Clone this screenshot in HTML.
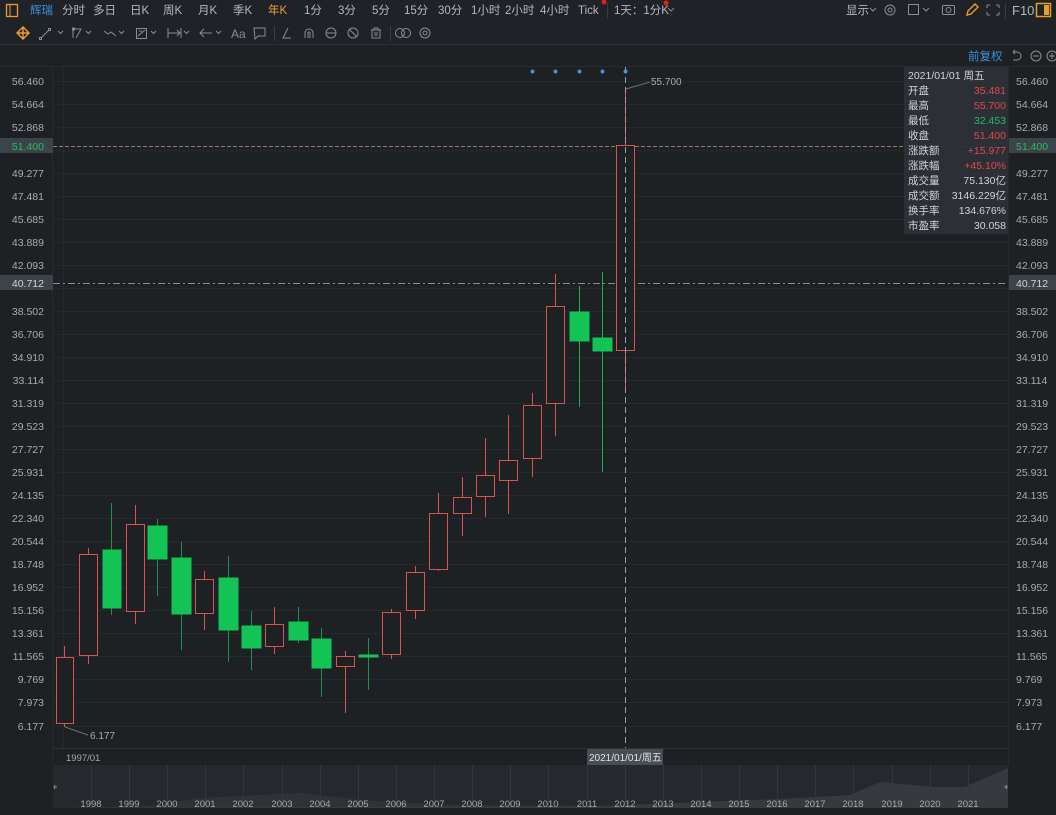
<!DOCTYPE html>
<html><head><meta charset="utf-8"><style>
html,body{margin:0;padding:0;background:#1e2124;width:1056px;height:815px;overflow:hidden;font-family:"Liberation Sans","Noto Sans CJK SC",sans-serif;}
svg{position:absolute;left:0;top:0}
</style></head><body>
<svg width="1056" height="815" viewBox="0 0 1056 815" font-family="Liberation Sans, Noto Sans CJK SC, sans-serif">
<rect width="1056" height="815" fill="#1e2124"/>
<!-- top toolbar -->
<rect x="0" y="0" width="1056" height="22" fill="#1f2226"/>
<line x1="0" y1="22.5" x2="1056" y2="22.5" stroke="#2c3035"/>
<rect x="0" y="22" width="1056" height="22" fill="#1f2226"/>
<line x1="0" y1="44.5" x2="1056" y2="44.5" stroke="#2c3035"/>
<rect x="6.5" y="4.5" width="11" height="12" fill="none" stroke="#e5a02c" stroke-width="1.3"/><line x1="10" y1="5" x2="10" y2="16" stroke="#e5a02c"/>
<g font-size="11.5" fill="#b4b8bd">
<text x="30" y="14" fill="#3d8fe0">辉瑞</text>
<text x="62" y="14">分时</text><text x="93" y="14">多日</text><text x="130" y="14">日K</text>
<text x="163" y="14">周K</text><text x="198" y="14">月K</text><text x="233" y="14">季K</text>
<text x="268" y="14" fill="#f0a030">年K</text><text x="304" y="14">1分</text><text x="338" y="14">3分</text>
<text x="372" y="14">5分</text><text x="404" y="14">15分</text><text x="438" y="14">30分</text>
<text x="471" y="14">1小时</text><text x="505" y="14">2小时</text><text x="540" y="14">4小时</text>
<text x="578" y="14">Tick</text><text x="614" y="14">1天：1分K</text>
<text x="846" y="14">显示</text>
<text x="1012" y="15" font-size="13">F10</text>
</g>
<circle cx="604" cy="2" r="2.5" fill="#e02020"/><circle cx="666" cy="3" r="2.5" fill="#e02020"/>
<line x1="607.5" y1="3" x2="607.5" y2="19" stroke="#3a3e43"/>
<g fill="none" stroke="#8a8f95" stroke-width="1">
<path d="M668 8l3 3 3-3"/><path d="M870 8l3 3 3-3"/>
<circle cx="890" cy="10" r="5"/><circle cx="890" cy="10" r="2"/>
<rect x="908.5" y="4.5" width="10" height="10"/><path d="M923 8l3 3 3-3"/>
<rect x="942.5" y="5.5" width="12" height="9" rx="1"/><circle cx="948.5" cy="10" r="2.5"/>
<path d="M987 5h3M987 5v3M999 5h-3M999 5v3M987 15h3M987 15v-3M999 15h-3M999 15v-3"/>
<line x1="1005.5" y1="3" x2="1005.5" y2="19" stroke="#3a3e43"/>
</g>
<path d="M967 15l1-4 7-7 3 3-7 7z" fill="none" stroke="#e5a02c" stroke-width="1.4"/>
<rect x="1036.5" y="3.5" width="14" height="13" fill="none" stroke="#e5a02c" stroke-width="1.5"/><rect x="1044" y="5" width="5" height="10" fill="#e5a02c"/>
<!-- second toolbar -->
<g fill="none" stroke="#8a8f95" stroke-width="1">
<path d="M17 33h12M23 27v12M20 30l3-3 3 3M20 36l3 3 3-3M20 30l-3 3 3 3M26 30l3 3-3 3" stroke="#f0a030" stroke-width="1.4"/>
<path d="M41 38l8-8"/><rect x="39.5" y="37.5" width="2" height="2"/><rect x="48.5" y="28.5" width="2" height="2"/><path d="M58 31l2.5 2.5 2.5-2.5"/>
<path d="M73 29h8l-5 9"/><rect x="72.5" y="28" width="2" height="2"/><path d="M73 30v8"/><path d="M86 31l2.5 2.5 2.5-2.5"/>
<path d="M104 31l4 3 3-2 5 4"/><path d="M119 31l2.5 2.5 2.5-2.5"/>
<rect x="136.5" y="28.5" width="10" height="10"/><path d="M138 36l7-6M139 31h3"/><path d="M151 31l2.5 2.5 2.5-2.5"/>
<path d="M168 28v10M181 28v10M168 33h12M177 30l3 3-3 3"/><path d="M184 31l2.5 2.5 2.5-2.5"/>
<path d="M200 33h12M204 29l-4 4 4 4"/><path d="M216 31l2.5 2.5 2.5-2.5"/>
<path d="M254 28h11v8h-7l-3 3z"/>
<line x1="274.5" y1="26" x2="274.5" y2="41" stroke="#3a3e43"/>
<path d="M288 28l-5 10h8"/>
<path d="M305 38v-5a4 4 0 0 1 8 0v5M308 38v-5a1 1 0 0 1 2 0v5"/>
<circle cx="331" cy="33" r="5"/><path d="M326 33h10"/>
<circle cx="353" cy="33" r="5"/><path d="M349 29l8 8"/>
<path d="M371 30h10M374 30v-2h4v2M372 30v8h8v-8M375 32v4M377 32v4"/>
<line x1="390.5" y1="26" x2="390.5" y2="41" stroke="#3a3e43"/>
<circle cx="400" cy="33" r="4.5"/><circle cx="406" cy="33" r="4.5"/>
<circle cx="425" cy="33" r="5"/><circle cx="425" cy="33" r="2"/>
</g>
<text x="231" y="38" font-size="12" fill="#8a8f95">Aa</text>
<!-- chart grid -->
<g stroke="#272b30" stroke-width="1">
<line x1="52.5" y1="66" x2="52.5" y2="765"/>
<line x1="1008.5" y1="66" x2="1008.5" y2="765"/>
<line x1="0" y1="66.5" x2="1056" y2="66.5"/>
<line x1="52" y1="748.5" x2="1008" y2="748.5" stroke="#2e3237"/>
</g>
<g id="grid" stroke="#262a2f">
<line x1="53" x2="1008" y1="81.5" y2="81.5"/><line x1="53" x2="1008" y1="104.5" y2="104.5"/><line x1="53" x2="1008" y1="127.5" y2="127.5"/><line x1="53" x2="1008" y1="150.5" y2="150.5"/><line x1="53" x2="1008" y1="173.5" y2="173.5"/><line x1="53" x2="1008" y1="196.5" y2="196.5"/><line x1="53" x2="1008" y1="219.5" y2="219.5"/><line x1="53" x2="1008" y1="242.5" y2="242.5"/><line x1="53" x2="1008" y1="265.5" y2="265.5"/><line x1="53" x2="1008" y1="288.5" y2="288.5"/><line x1="53" x2="1008" y1="311.5" y2="311.5"/><line x1="53" x2="1008" y1="334.5" y2="334.5"/><line x1="53" x2="1008" y1="357.5" y2="357.5"/><line x1="53" x2="1008" y1="380.5" y2="380.5"/><line x1="53" x2="1008" y1="403.5" y2="403.5"/><line x1="53" x2="1008" y1="426.5" y2="426.5"/><line x1="53" x2="1008" y1="449.5" y2="449.5"/><line x1="53" x2="1008" y1="472.5" y2="472.5"/><line x1="53" x2="1008" y1="495.5" y2="495.5"/><line x1="53" x2="1008" y1="518.5" y2="518.5"/><line x1="53" x2="1008" y1="541.5" y2="541.5"/><line x1="53" x2="1008" y1="564.5" y2="564.5"/><line x1="53" x2="1008" y1="587.5" y2="587.5"/><line x1="53" x2="1008" y1="610.5" y2="610.5"/><line x1="53" x2="1008" y1="633.5" y2="633.5"/><line x1="53" x2="1008" y1="656.5" y2="656.5"/><line x1="53" x2="1008" y1="679.5" y2="679.5"/><line x1="53" x2="1008" y1="702.5" y2="702.5"/><line x1="53" x2="1008" y1="726.5" y2="726.5"/>
<line x1="63.5" y1="67" x2="63.5" y2="748"/>
</g>
<!-- axis labels -->
<g font-size="10.5" fill="#a6abb0">
<g text-anchor="end">
<text x="44" y="85">56.460</text><text x="44" y="108">54.664</text><text x="44" y="131">52.868</text><text x="44" y="177">49.277</text><text x="44" y="200">47.481</text><text x="44" y="223">45.685</text><text x="44" y="246">43.889</text><text x="44" y="269">42.093</text><text x="44" y="315">38.502</text><text x="44" y="338">36.706</text><text x="44" y="361">34.910</text><text x="44" y="384">33.114</text><text x="44" y="407">31.319</text><text x="44" y="430">29.523</text><text x="44" y="453">27.727</text><text x="44" y="476">25.931</text><text x="44" y="499">24.135</text><text x="44" y="522">22.340</text><text x="44" y="545">20.544</text><text x="44" y="568">18.748</text><text x="44" y="591">16.952</text><text x="44" y="614">15.156</text><text x="44" y="637">13.361</text><text x="44" y="660">11.565</text><text x="44" y="683">9.769</text><text x="44" y="706">7.973</text><text x="44" y="730">6.177</text>
</g>
<g>
<text x="1016" y="85">56.460</text><text x="1016" y="108">54.664</text><text x="1016" y="131">52.868</text><text x="1016" y="177">49.277</text><text x="1016" y="200">47.481</text><text x="1016" y="223">45.685</text><text x="1016" y="246">43.889</text><text x="1016" y="269">42.093</text><text x="1016" y="315">38.502</text><text x="1016" y="338">36.706</text><text x="1016" y="361">34.910</text><text x="1016" y="384">33.114</text><text x="1016" y="407">31.319</text><text x="1016" y="430">29.523</text><text x="1016" y="453">27.727</text><text x="1016" y="476">25.931</text><text x="1016" y="499">24.135</text><text x="1016" y="522">22.340</text><text x="1016" y="545">20.544</text><text x="1016" y="568">18.748</text><text x="1016" y="591">16.952</text><text x="1016" y="614">15.156</text><text x="1016" y="637">13.361</text><text x="1016" y="660">11.565</text><text x="1016" y="683">9.769</text><text x="1016" y="706">7.973</text><text x="1016" y="730">6.177</text>
</g>
</g>
<!-- highlighted price tags -->
<rect x="0" y="138" width="53" height="15" fill="#3d434a"/><rect x="1009" y="138" width="47" height="15" fill="#3d434a"/>
<text x="44" y="150" font-size="10.5" fill="#20c060" text-anchor="end">51.400</text><text x="1016" y="150" font-size="10.5" fill="#20c060">51.400</text>
<rect x="0" y="275" width="53" height="15" fill="#3d434a"/><rect x="1009" y="275" width="47" height="15" fill="#3d434a"/>
<text x="44" y="287" font-size="10.5" fill="#d0d4d8" text-anchor="end">40.712</text><text x="1016" y="287" font-size="10.5" fill="#d0d4d8">40.712</text>
<!-- header -->
<text x="968" y="60" font-size="11.5" fill="#3d8fe0">前复权</text>
<g fill="none" stroke="#8a8f95"><path d="M1013 52h4a4 4 0 0 1 0 8h-4M1013 52l2-2M1013 52l2 2"/><circle cx="1036" cy="56" r="5"/><path d="M1033 56h6"/><circle cx="1052" cy="56" r="5"/><path d="M1049 56h6M1052 53v6"/></g>
<!-- price lines -->
<line x1="53" y1="146.5" x2="1008" y2="146.5" stroke="#9a7a62" stroke-dasharray="4,2"/>
<line x1="53" y1="283.5" x2="1008" y2="283.5" stroke="#8a8f95" stroke-dasharray="7,3,2,3"/>
<!-- candles -->
<g stroke="#d9534f" fill="none">
<line x1="64.5" y1="646" x2="64.5" y2="727"/><rect x="56.5" y="657.5" width="17" height="66" fill="#1e2124"/>
<line x1="88.5" y1="548" x2="88.5" y2="664"/><rect x="79.5" y="554.5" width="18" height="101" fill="#1e2124"/>
<line x1="135.5" y1="505" x2="135.5" y2="624"/><rect x="126.5" y="524.5" width="18" height="87" fill="#1e2124"/>
<line x1="204.5" y1="571" x2="204.5" y2="630"/><rect x="195.5" y="579.5" width="18" height="34" fill="#1e2124"/>
<line x1="274.5" y1="607" x2="274.5" y2="654"/><rect x="265.5" y="624.5" width="18" height="22" fill="#1e2124"/>
<line x1="345.5" y1="651" x2="345.5" y2="713"/><rect x="336.5" y="656.5" width="18" height="10" fill="#1e2124"/>
<line x1="391.5" y1="609" x2="391.5" y2="659"/><rect x="382.5" y="612.5" width="18" height="42" fill="#1e2124"/>
<line x1="415.5" y1="566" x2="415.5" y2="619"/><rect x="406.5" y="572.5" width="18" height="38" fill="#1e2124"/>
<line x1="438.5" y1="493" x2="438.5" y2="571"/><rect x="429.5" y="513.5" width="18" height="56" fill="#1e2124"/>
<line x1="462.5" y1="477" x2="462.5" y2="536"/><rect x="453.5" y="497.5" width="18" height="16" fill="#1e2124"/>
<line x1="485.5" y1="438" x2="485.5" y2="517"/><rect x="476.5" y="475.5" width="18" height="21" fill="#1e2124"/>
<line x1="508.5" y1="415" x2="508.5" y2="514"/><rect x="499.5" y="460.5" width="18" height="20" fill="#1e2124"/>
<line x1="532.5" y1="393" x2="532.5" y2="477"/><rect x="523.5" y="405.5" width="18" height="53" fill="#1e2124"/>
<line x1="555.5" y1="274" x2="555.5" y2="436"/><rect x="546.5" y="306.5" width="18" height="97" fill="#1e2124"/>
<line x1="625.5" y1="89" x2="625.5" y2="393"/><rect x="616.5" y="145.5" width="18" height="205" fill="#1e2124"/>
</g>
<g fill="#12c455" stroke="#12c455">
<line x1="111.5" y1="503" x2="111.5" y2="615" stroke="#1f8f4a"/><rect x="103" y="550" width="18" height="58"/>
<line x1="157.5" y1="519" x2="157.5" y2="596" stroke="#1f8f4a"/><rect x="148" y="526" width="19" height="33"/>
<line x1="181.5" y1="542" x2="181.5" y2="650" stroke="#1f8f4a"/><rect x="172" y="558" width="19" height="56"/>
<line x1="228.5" y1="556" x2="228.5" y2="662" stroke="#1f8f4a"/><rect x="219" y="578" width="19" height="52"/>
<line x1="251.5" y1="611" x2="251.5" y2="670" stroke="#1f8f4a"/><rect x="242" y="626" width="19" height="22"/>
<line x1="298.5" y1="607" x2="298.5" y2="643" stroke="#1f8f4a"/><rect x="289" y="622" width="19" height="18"/>
<line x1="321.5" y1="628" x2="321.5" y2="697" stroke="#1f8f4a"/><rect x="312" y="639" width="19" height="29"/>
<line x1="368.5" y1="638" x2="368.5" y2="690" stroke="#1f8f4a"/><rect x="359" y="655" width="19" height="2"/>
<line x1="579.5" y1="286" x2="579.5" y2="407" stroke="#1fae55"/><rect x="570" y="312" width="19" height="29"/>
<line x1="602.5" y1="272" x2="602.5" y2="472" stroke="#1fae55"/><rect x="593" y="338" width="19" height="13"/>
</g>
<!-- crosshair -->
<line x1="625.5" y1="67" x2="625.5" y2="748" stroke="#9aa0a6" stroke-dasharray="6,4"/>
<g fill="#4a90e2"><circle cx="532.5" cy="71.5" r="2"/><circle cx="555.5" cy="71.5" r="2"/><circle cx="579.5" cy="71.5" r="2"/><circle cx="602.5" cy="71.5" r="2"/><circle cx="625.5" cy="71.5" r="2"/></g>
<line x1="626" y1="89" x2="650" y2="82" stroke="#6a7076"/>
<text x="651" y="85" font-size="10" fill="#a6abb0">55.700</text>
<line x1="65" y1="727" x2="88" y2="735" stroke="#6a7076"/>
<text x="90" y="739" font-size="10" fill="#a6abb0">6.177</text>
<!-- info box -->
<rect x="904" y="67" width="104" height="167" fill="#2d3238" opacity="0.95"/>
<g font-size="10.5" fill="#d0d4d8">
<text x="908" y="79">2021/01/01 周五</text>
<text x="908" y="94">开盘</text><text x="908" y="109">最高</text><text x="908" y="124">最低</text><text x="908" y="139">收盘</text><text x="908" y="154">涨跌额</text><text x="908" y="169">涨跌幅</text><text x="908" y="184">成交量</text><text x="908" y="199">成交额</text><text x="908" y="214">换手率</text><text x="908" y="229">市盈率</text>
<g text-anchor="end">
<text x="1006" y="94" fill="#e04848">35.481</text><text x="1006" y="109" fill="#e04848">55.700</text><text x="1006" y="124" fill="#20c060">32.453</text><text x="1006" y="139" fill="#e04848">51.400</text><text x="1006" y="154" fill="#e04848">+15.977</text><text x="1006" y="169" fill="#e04848">+45.10%</text><text x="1006" y="184">75.130亿</text><text x="1006" y="199">3146.229亿</text><text x="1006" y="214">134.676%</text><text x="1006" y="229">30.058</text>
</g></g>
<!-- date axis -->
<text x="66" y="761" font-size="9.5" fill="#a6abb0">1997/01</text>
<rect x="587" y="749" width="76" height="16" fill="#474d55"/>
<text x="589" y="761" font-size="10" fill="#e0e3e6">2021/01/01/周五</text>
<!-- navigator -->
<rect x="53" y="765" width="955" height="43" fill="#25282c"/>
<path d="M53 808 L150 806 L200 798 L300 793 L360 800 L450 805 L600 806 L700 803 L850 801 L930 798 L960 790 L1008 768 L1008 808Z" fill="#2f3337"/>
<path d="M53 808 L600 806 L700 802 L780 799 L850 795 L880 782 L935 787 L965 787 L1008 768 L1008 808Z" fill="#363a3f"/>
<g stroke="#33373c">
<line x1="91.5" y1="765" x2="91.5" y2="808"/><line x1="129.5" y1="765" x2="129.5" y2="808"/><line x1="167.5" y1="765" x2="167.5" y2="808"/><line x1="205.5" y1="765" x2="205.5" y2="808"/><line x1="243.5" y1="765" x2="243.5" y2="808"/><line x1="282.5" y1="765" x2="282.5" y2="808"/><line x1="320.5" y1="765" x2="320.5" y2="808"/><line x1="358.5" y1="765" x2="358.5" y2="808"/><line x1="396.5" y1="765" x2="396.5" y2="808"/><line x1="434.5" y1="765" x2="434.5" y2="808"/><line x1="472.5" y1="765" x2="472.5" y2="808"/><line x1="510.5" y1="765" x2="510.5" y2="808"/><line x1="548.5" y1="765" x2="548.5" y2="808"/><line x1="587.5" y1="765" x2="587.5" y2="808"/><line x1="625.5" y1="765" x2="625.5" y2="808"/><line x1="663.5" y1="765" x2="663.5" y2="808"/><line x1="701.5" y1="765" x2="701.5" y2="808"/><line x1="739.5" y1="765" x2="739.5" y2="808"/><line x1="777.5" y1="765" x2="777.5" y2="808"/><line x1="815.5" y1="765" x2="815.5" y2="808"/><line x1="853.5" y1="765" x2="853.5" y2="808"/><line x1="892.5" y1="765" x2="892.5" y2="808"/><line x1="930.5" y1="765" x2="930.5" y2="808"/><line x1="968.5" y1="765" x2="968.5" y2="808"/>
</g>
<g font-size="9.5" fill="#a6abb0" text-anchor="middle">
<text x="91" y="807">1998</text><text x="129" y="807">1999</text><text x="167" y="807">2000</text><text x="205" y="807">2001</text><text x="243" y="807">2002</text><text x="282" y="807">2003</text><text x="320" y="807">2004</text><text x="358" y="807">2005</text><text x="396" y="807">2006</text><text x="434" y="807">2007</text><text x="472" y="807">2008</text><text x="510" y="807">2009</text><text x="548" y="807">2010</text><text x="587" y="807">2011</text><text x="625" y="807">2012</text><text x="663" y="807">2013</text><text x="701" y="807">2014</text><text x="739" y="807">2015</text><text x="777" y="807">2016</text><text x="815" y="807">2017</text><text x="853" y="807">2018</text><text x="892" y="807">2019</text><text x="930" y="807">2020</text><text x="968" y="807">2021</text>
</g>
<g stroke="#8a8f95"><path d="M54 787h3M55 785l-1 2 1 2"/><path d="M1004 787h3M1006 785l1 2-1 2"/></g>
</svg>
</body></html>
